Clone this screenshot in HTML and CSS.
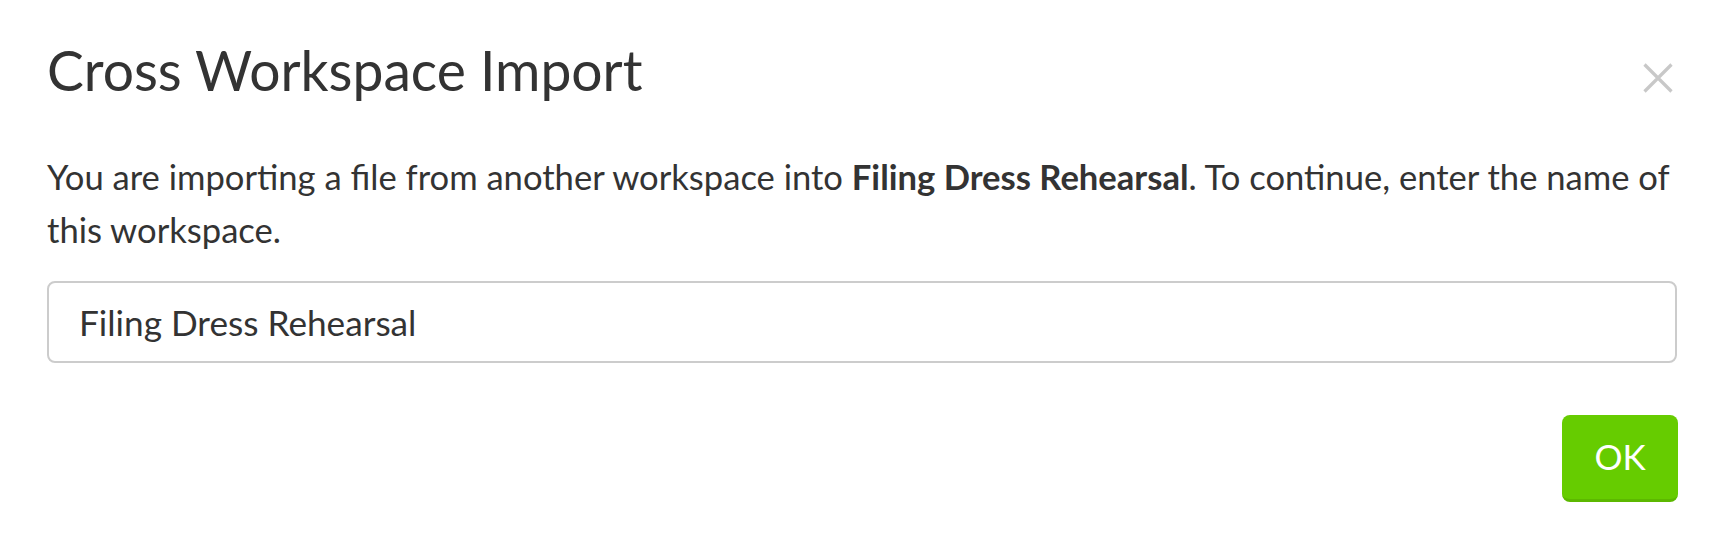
FILE: index.html
```html
<!DOCTYPE html>
<html>
<head>
<meta charset="utf-8">
<link rel="stylesheet" href="styles.css">
</head>
<body>
<div class="modal">
  <div class="modal-header">
    <h1 class="modal-title">Cross Workspace Import</h1>
    <button class="close" aria-label="Close">
      <svg width="30" height="30" viewBox="0 0 30 30"><path d="M1.5 1.5 L28.5 28.5 M28.5 1.5 L1.5 28.5" stroke="#c8c8c8" stroke-width="3.2" fill="none"/></svg>
    </button>
  </div>
  <p class="modal-text">You are importing a file from another workspace into <strong>Filing Dress Rehearsal</strong>. To continue, enter the name of this workspace.</p>
  <input class="modal-input" type="text" value="Filing Dress Rehearsal">
  <div class="modal-footer">
    <button class="btn-ok">OK</button>
  </div>
</div>
</body>
</html>
```
FILE: styles.css
```css
html, body {
  margin: 0;
  padding: 0;
  background: #ffffff;
}
body {
  font-family: Lato, "Open Sans", sans-serif;
  color: #333333;
}
.modal {
  padding: 37px 49px 0 47px;
  display: flex;
  flex-direction: column;
}
.modal-header {
  display: flex;
  justify-content: space-between;
  align-items: flex-start;
}
.modal-title {
  margin: 0;
  font-size: 55.2px;
  line-height: 67px;
  font-weight: 400;
  color: #333333;
}
.close {
  margin: 26px 4px 0 0;
  padding: 0;
  border: none;
  background: none;
  width: 30px;
  height: 30px;
  display: block;
}
.close svg { display: block; }
.modal-text {
  margin: 47px 0 0 0;
  font-size: 34.6px;
  line-height: 52.5px;
}
.modal-text strong { font-weight: 700; }
.modal-input {
  margin-top: 25px;
  box-sizing: border-box;
  width: 100%;
  height: 82px;
  border: 2px solid #cccccc;
  border-radius: 8px;
  padding: 0 30px;
  font-family: Lato, sans-serif;
  font-size: 35.2px;
  color: #333333;
  background: #fff;
  outline: none;
}
.modal-footer {
  display: flex;
  justify-content: flex-end;
  margin-top: 52px;
}
.btn-ok {
  box-sizing: border-box;
  width: 116px;
  height: 87px;
  margin-right: -1px;
  background: #66cc00;
  border: none;
  border-bottom: 3px solid #5cb800;
  border-radius: 8px;
  color: #ffffff;
  font-family: Lato, sans-serif;
  font-size: 35px;
  padding: 0 0 2px 0;
}
```
